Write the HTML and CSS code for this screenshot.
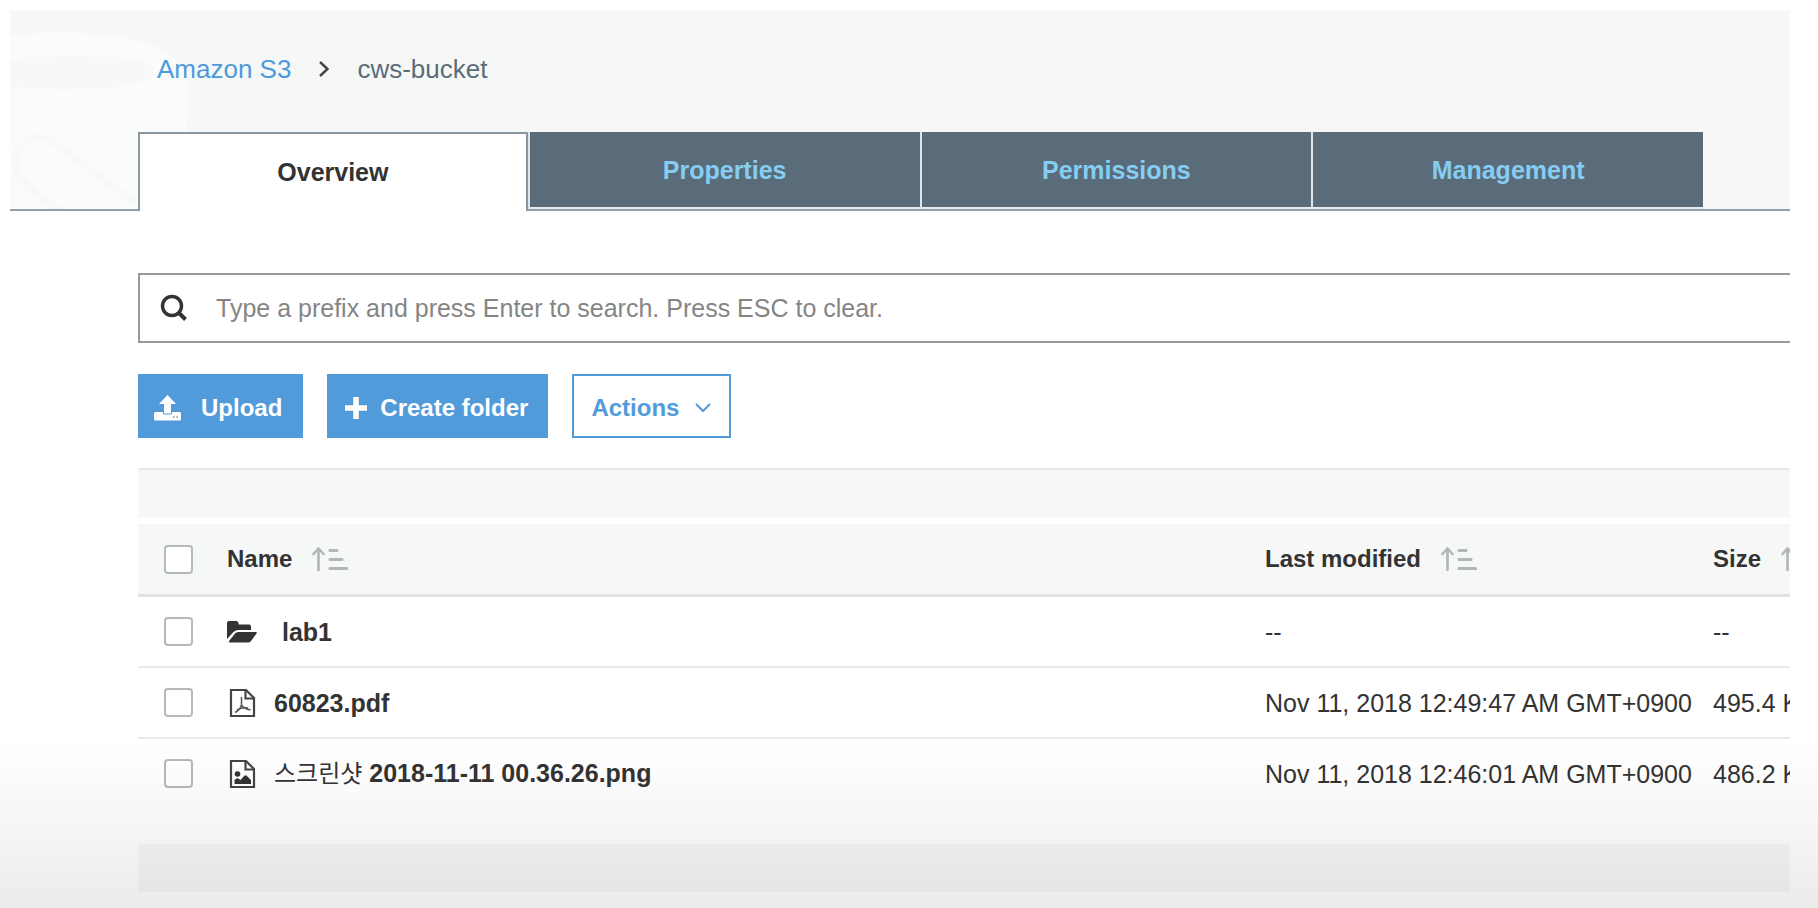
FILE: index.html
```html
<!DOCTYPE html>
<html lang="en">
<head>
<meta charset="utf-8">
<title>Amazon S3 - cws-bucket</title>
<link rel="stylesheet" href="styles.css">
</head>
<body>
<svg class="defs" width="0" height="0" aria-hidden="true">
  <symbol id="sort" viewBox="0 0 36 26">
    <path d="M6.500 24V3M1.500 8L6.500 2.500l5 5.500" fill="none" stroke="#b3b6b6" stroke-width="2.600" stroke-linecap="round" stroke-linejoin="round"/>
    <path d="M18 4.500h7M18 13.500h12M18 22.500h16.500" fill="none" stroke="#b3b6b6" stroke-width="3.200" stroke-linecap="round"/>
  </symbol>
</svg>
<div class="page">
  <header class="header">
    <svg class="bucket" viewBox="0 0 190 199" aria-hidden="true">
      <path d="M0 27Q40 20 84 24Q150 30 164 48Q180 64 178 92L172 199H0Z" fill="#fafbfb"/>
      <path d="M0 49Q60 43 115 48Q146 53 143 63Q138 74 100 78Q50 82 0 77Z" fill="#f7f9f9"/>
      <path d="M124 192L47 135Q30 122 17 131Q0 142 8 164Q14 178 62 208" fill="none" stroke="#f7f9f9" stroke-width="7"/>
    </svg>
    <nav class="breadcrumb" aria-label="Breadcrumb">
      <a href="#">Amazon S3</a>
      <svg width="12" height="18" viewBox="0 0 12 18" aria-hidden="true"><path d="M2 2l7.500 7L2 16" fill="none" stroke="#444" stroke-width="2.400"/></svg>
      <span>cws-bucket</span>
    </nav>
    <div class="tabs" role="tablist">
      <button class="tab tab-active" role="tab" aria-selected="true">Overview</button>
      <button class="tab" role="tab">Properties</button>
      <button class="tab" role="tab">Permissions</button>
      <button class="tab" role="tab">Management</button>
    </div>
  </header>
  <main class="main">
    <label class="search">
      <svg width="28" height="28" viewBox="0 0 28 28" aria-hidden="true"><circle cx="12" cy="12" r="9.500" fill="none" stroke="#333" stroke-width="3.400"/><path d="M18.500 18.500l7 7" stroke="#333" stroke-width="4"/></svg>
      <input class="search-input" type="text" aria-label="Search by prefix" placeholder="Type a prefix and press Enter to search. Press ESC to clear.">
    </label>
    <div class="actions">
      <button class="btn btn-upload">
        <svg width="27" height="26" viewBox="0 0 27 26" aria-hidden="true"><path d="M1.500 17h24q1.500 0 1.500 1.500v5.500q0 1.500-1.500 1.500h-24Q0 25.500 0 24v-5.500Q0 17 1.500 17z" fill="#fff"/><path d="M13.500 0l8.500 9h-5v9h-7V9H5z" fill="#fff"/><path d="M9.500 17v2h8v-2" fill="none" stroke="#529bda" stroke-width="1"/><path d="M19 22h1.500M22.500 22h1.500" stroke="#529bda" stroke-width="1.500"/></svg>
        <span>Upload</span>
      </button>
      <button class="btn btn-create">
        <svg width="22" height="22" viewBox="0 0 22 22" aria-hidden="true"><path d="M11 0v22M0 11h22" stroke="#fff" stroke-width="5.500"/></svg>
        <span>Create folder</span>
      </button>
      <button class="btn btn-menu">
        <span>Actions</span>
        <svg width="16" height="10" viewBox="0 0 16 10" aria-hidden="true"><path d="M1 1l7 7 7-7" fill="none" stroke="#529bda" stroke-width="2"/></svg>
      </button>
    </div>
    <div class="bar bar-top"></div>
    <table class="files">
      <colgroup><col class="col-check"><col><col class="col-date"><col class="col-size"></colgroup>
      <thead>
        <tr>
          <th><input class="check" type="checkbox" aria-label="Select all"></th>
          <th><span class="head">Name <svg width="36" height="26"><use href="#sort"/></svg></span></th>
          <th><span class="head">Last modified <svg width="36" height="26"><use href="#sort"/></svg></span></th>
          <th><span class="head">Size <svg width="36" height="26"><use href="#sort"/></svg></span></th>
        </tr>
      </thead>
      <tbody>
        <tr>
          <td><input class="check" type="checkbox" aria-label="Select lab1"></td>
          <td><span class="name name-folder"><svg width="30" height="24" viewBox="0 0 30 24" aria-hidden="true"><path d="M0 19V3Q0 1 2 1h7.500Q11 1 11.500 3v1.500H22Q24 4.500 24 6.500V10H11Q8 10 6 12.500z" fill="#333"/><path d="M11 12h18q1.500 0 .5 1.500l-5.500 7.500Q23 22.500 21 22.500H3Q1 22.500 2.500 20.500L8 13.500Q9.500 12 11 12z" fill="#333"/></svg>lab1</span></td>
          <td>--</td>
          <td>--</td>
        </tr>
        <tr>
          <td><input class="check" type="checkbox" aria-label="Select 60823.pdf"></td>
          <td><span class="name"><svg width="30" height="30" viewBox="0 0 30 30" aria-hidden="true"><path d="M4 2h15l8 8v18H4z" fill="none" stroke="#444" stroke-width="2.200"/><path d="M18.500 2v8.500H27" fill="none" stroke="#444" stroke-width="2.200"/><path d="M14.500 9v8M14.500 17Q13 22 8 24.500M14.500 17q3 4 9 5M10 22q5-3 11-2" fill="none" stroke="#555" stroke-width="1.500"/></svg>60823.pdf</span></td>
          <td>Nov 11, 2018 12:49:47 AM GMT+0900</td>
          <td>495.4 KB</td>
        </tr>
        <tr>
          <td><input class="check" type="checkbox" aria-label="Select screenshot"></td>
          <td><span class="name"><svg width="30" height="30" viewBox="0 0 30 30" aria-hidden="true"><path d="M4 2h15l8 8v18H4z" fill="none" stroke="#444" stroke-width="2.200"/><path d="M18.500 2v8.500H27" fill="none" stroke="#444" stroke-width="2.200"/><circle cx="10.500" cy="15" r="2.800" fill="#333"/><path d="M7.500 25v-4l3-2 3 2 4-4.500h2L24 21v4z" fill="#333"/></svg><span><span class="ko" lang="ko">스크린샷</span> 2018-11-11 00.36.26.png</span></span></td>
          <td>Nov 11, 2018 12:46:01 AM GMT+0900</td>
          <td>486.2 KB</td>
        </tr>
      </tbody>
    </table>
    <div class="bar bar-bottom"></div>
  </main>
</div>
<div class="shade"></div>
</body>
</html>
```
FILE: styles.css
```css
* { box-sizing: border-box; }
body {
  margin: 0;
  min-height: 100vh;
  position: relative;
  background: #fff;
  color: #333;
  font-family: "Liberation Sans", "Noto Sans CJK KR", sans-serif;
  font-size: 25px;
  line-height: 30px;
}
button, input { font: inherit; }
svg { display: block; flex: none; }
.defs { position: absolute; }
.page { margin: 10px 28px 0 10px; overflow: hidden; }

.header {
  position: relative;
  padding-left: 128px;
  padding-right: 87px;
  background: #f6f8f8;
  border-bottom: 2px solid #949fa7;
}
.bucket { position: absolute; left: 0; top: 0; width: 190px; height: 199px; }
.breadcrumb {
  position: relative;
  display: flex;
  align-items: center;
  gap: 27px;
  height: 122px;
  padding: 0 0 4px 19px;
  font-size: 26px;
  color: #5b6c79;
}
.breadcrumb a { color: #4e9ada; text-decoration: none; }
.tabs {
  position: relative;
  display: grid;
  grid-template-columns: repeat(4, 1fr);
  gap: 2px;
  background: #dfe5e8;
}
.tab {
  height: 77px;
  padding: 0;
  border: 0;
  border-bottom: 2px solid #e8ecee;
  background: #5a6c7a;
  color: #86cdf2;
  font-weight: bold;
}
.tab-active {
  height: 79px;
  margin-bottom: -2px;
  padding-bottom: 2px;
  border: 2px solid #8997a1;
  border-bottom: 0;
  background: #fff;
  color: #333;
}

.main { padding: 62px 0 17px 128px; }
.search {
  display: flex;
  align-items: center;
  gap: 28px;
  height: 70px;
  padding-left: 20px;
  border: 2px solid #999;
  border-right: 0;
}
.search-input {
  flex: 1;
  min-width: 0;
  padding: 0;
  border: 0;
  outline: 0;
  background: none;
  color: #333;
}
.search-input::placeholder { color: #858585; opacity: 1; }

.actions { display: flex; gap: 24px; padding: 31px 0 30px; }
.btn {
  display: flex;
  align-items: center;
  height: 64px;
  border: 2px solid #529bda;
  background: #529bda;
  color: #fff;
  font-size: 24px;
  font-weight: bold;
}
.btn-upload { gap: 20px; padding: 3px 19px 0 14px; }
.btn-create { gap: 13px; padding: 3px 18px 0 16px; }
.btn-menu { gap: 16px; padding: 3px 18px 0 17px; background: #fff; color: #529bda; }

.bar { background: #f6f8f8; }
.bar-top { height: 50px; border-top: 2px solid #e9ebeb; margin-bottom: 6px; }
.bar-bottom { height: 48px; margin-top: 34px; }

/* The table runs past the right edge of the panel. */
.files {
  width: calc(100% + 123px);
  table-layout: fixed;
  border-collapse: separate;
  border-spacing: 0;
}
.col-check { width: 89px; }
.col-date { width: 448px; }
.col-size { width: 200px; }
.files th, .files td {
  height: 71px;
  padding: 0;
  text-align: left;
  vertical-align: middle;
  white-space: nowrap;
}
.files th {
  height: 73px;
  font-size: 24px;
  background: #f6f8f8;
  border-bottom: 3px solid #dfe2e2;
}
.files td { border-bottom: 2px solid #e9eaea; }
.files tr:last-child td { border-bottom-color: transparent; }
.head { display: flex; align-items: center; gap: 20px; }
.name { display: flex; align-items: center; gap: 17px; font-weight: bold; }
.name-folder { gap: 25px; }
.ko { font-size: 24px; font-weight: 400; }
.check {
  display: block;
  appearance: none;
  width: 29px;
  height: 29px;
  margin: 0 0 0 26px;
  border: 2px solid #b4b9bb;
  border-radius: 4px;
  background: #fff;
}

.shade {
  position: absolute;
  left: 0;
  right: 0;
  bottom: 0;
  height: 168px;
  pointer-events: none;
  background: linear-gradient(rgba(0, 0, 0, 0), rgba(0, 0, 0, 0.018) 28%, rgba(0, 0, 0, 0.05) 65%, rgba(0, 0, 0, 0.08));
}
```
